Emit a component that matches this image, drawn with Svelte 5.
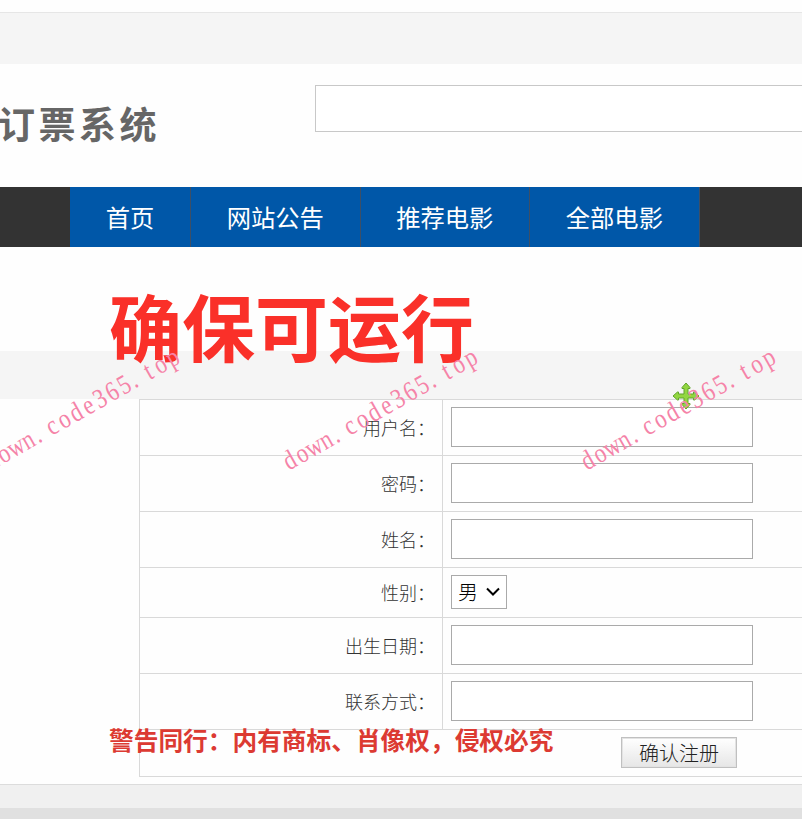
<script lang="ts">
	type Field = { label: string; name: string; kind: 'text' | 'password' | 'select' };

	const navItems = ['首页', '网站公告', '推荐电影', '全部电影'];

	const fields: Field[] = [
		{ label: '用户名', name: 'username', kind: 'text' },
		{ label: '密码', name: 'password', kind: 'password' },
		{ label: '姓名', name: 'realname', kind: 'text' },
		{ label: '性别', name: 'gender', kind: 'select' },
		{ label: '出生日期', name: 'birthday', kind: 'text' },
		{ label: '联系方式', name: 'contact', kind: 'text' }
	];

	let values = $state<Record<string, string>>({ gender: '男' });

	const mark = 'down.code365.top';
	// every character sits in its own cell; dots hang to the left of theirs
	const markX = [...mark].map((c, i) => i * 16.9 - (c === '.' ? 4 : 0)).join(' ');
	const markStarts = [-8, 290, 588];
</script>

<div class="page">
	<div class="topbar"></div>

	<header class="header">
		<h1 class="logo">订票系统</h1>
		<input class="search" type="text" aria-label="搜索" />
	</header>

	<nav class="nav">
		{#each navItems as item}
			<a href="#top">{item}</a>
		{/each}
	</nav>

	<div class="band"></div>

	<form class="form" onsubmit={(e) => e.preventDefault()}>
		{#each fields as field}
			<div class="row">
				<label class="label" for={field.name}>{field.label}<span>：</span></label>
				<div class="cell">
					{#if field.kind === 'select'}
						<div class="select-wrap">
							<select id={field.name} bind:value={values[field.name]}>
								<option>男</option>
								<option>女</option>
							</select>
							<svg class="chevron" viewBox="0 0 16 10" aria-hidden="true">
								<path d="M2 1.5 L8 7.5 L14 1.5" />
							</svg>
						</div>
					{:else}
						<input id={field.name} type={field.kind} bind:value={values[field.name]} />
					{/if}
				</div>
			</div>
		{/each}
		<div class="row actions">
			<button type="submit">确认注册</button>
		</div>
	</form>

	<footer class="footer">
		<div class="footer-bar"></div>
	</footer>

	<!-- Overlays -->
	<p class="notice big">确保可运行</p>
	<p class="notice small">警告同行：内有商标、肖像权，侵权必究</p>

	<svg class="move" viewBox="0 0 28 28" aria-hidden="true">
		<path
			d="M14 1 L18 5.5 V6.5 H16 V12 H21.5 V10 H22.5 L27 14 L22.5 18 H21.5 V16 H16 V21.5 H18 V22.5 L14 27 L10 22.5 V21.5 H12 V16 H6.5 V18 H5.5 L1 14 L5.5 10 H6.5 V12 H12 V6.5 H10 V5.5 Z"
		/>
	</svg>

	<svg class="marks" viewBox="0 0 802 819" aria-hidden="true">
		{#each markStarts as x}
			<text x={markX} y="8" transform="translate({x} 461) rotate(-29.7) scale(0.82 1)">{mark}</text>
		{/each}
	</svg>
</div>

<style>
	:global(body) {
		margin: 0;
		background: #fff;
	}

	.page {
		position: relative;
		width: 802px;
		height: 819px;
		overflow: hidden;
		background: #fefefe;
		font-family: 'Noto Sans CJK SC', 'Noto Sans', sans-serif;
		color: #555;
	}

	.page * {
		box-sizing: border-box;
	}

	.topbar {
		height: 52px;
		margin-top: 12px;
		border-top: 1px solid #e6e6e6;
		background: #f5f5f5;
	}

	/* Header */

	.header {
		display: flex;
		align-items: flex-start;
		height: 123px;
		padding-top: 21px;
	}

	.logo {
		flex: none;
		width: 317px;
		margin: 10px 0 0 -2px;
		font-size: 37px;
		line-height: 56px;
		font-weight: 700;
		letter-spacing: 3.5px;
		color: #666;
	}

	.search {
		flex: none;
		width: 560px;
		height: 47px;
		border: 1px solid #c8c8c8;
		background: #fff;
	}

	/* Navigation */

	.nav {
		display: flex;
		height: 60px;
		padding-left: 70px;
		background: #333;
	}

	.nav a {
		padding: 0 35.7px;
		border-right: 1px solid #3d4f66;
		background: #0057a8;
		color: #fff;
		font-size: 24.3px;
		line-height: 59px;
		text-decoration: none;
	}

	.band {
		height: 48px;
		margin-top: 104px;
		background: #f5f5f5;
	}

	/* Registration form */

	.form {
		width: 1080px;
		margin-left: 139px;
		border: 1px solid #d9d9d9;
		border-top: none;
	}

	.row {
		display: flex;
		border-top: 1px solid #d9d9d9;
	}

	.label {
		display: flex;
		align-items: center;
		justify-content: flex-end;
		width: 303px;
		padding: 0 7px 2px 0;
		border-right: 1px solid #d9d9d9;
		color: #333;
		font-size: 18px;
		font-weight: 300;
	}

	.cell {
		padding: 7px 8px 8px;
	}

	.cell input {
		display: block;
		width: 302px;
		height: 40px;
		border: 1px solid #aaa;
		background: #fff;
	}

	.select-wrap {
		position: relative;
		width: 56px;
		height: 34px;
	}

	select {
		appearance: none;
		width: 100%;
		height: 100%;
		padding: 0 0 2px 6px;
		border: 1px solid #aaa;
		border-radius: 0;
		background: #fff;
		color: #000;
		font-family: inherit;
		font-size: 20px;
		font-weight: 300;
	}

	.chevron {
		position: absolute;
		top: 12px;
		right: 6px;
		width: 16px;
		height: 10px;
		fill: none;
		stroke: #000;
		stroke-width: 2;
		pointer-events: none;
	}

	.actions {
		justify-content: center;
		height: 47px;
		padding-top: 7px;
	}

	.actions button {
		width: 116px;
		height: 31px;
		padding: 1px 0 0;
		border: 1px solid #c0c0c0;
		box-shadow: inset 0 0 0 1px #e3e3e3;
		background: linear-gradient(#fff, #e6e6e6);
		color: #222;
		font-family: inherit;
		font-size: 20px;
		line-height: 26px;
		font-weight: 300;
	}

	.footer {
		height: 35px;
		margin-top: 7px;
		padding-top: 23px;
		border-top: 1px solid #dcdcdc;
		background: #f0f0f0;
	}

	.footer-bar {
		height: 11px;
		background: #e0e0e0;
	}

	/* Overlays */

	.notice {
		position: absolute;
		margin: 0;
		white-space: nowrap;
		font-weight: 700;
	}

	.big {
		top: 271px;
		left: 109px;
		color: #fa3029;
		font-size: 73px;
		line-height: 106px;
	}

	.small {
		top: 721px;
		left: 109px;
		color: #dc3a32;
		font-size: 24.7px;
		line-height: 36px;
	}

	.move {
		position: absolute;
		top: 382px;
		left: 672px;
		width: 28px;
		height: 28px;
		fill: #92d640;
		stroke: #62a52c;
		stroke-width: 1;
	}

	.marks {
		position: absolute;
		inset: 0;
		width: 802px;
		height: 819px;
		pointer-events: none;
	}

	.marks text {
		fill: #f583a8;
		font-family: 'Liberation Serif', serif;
		font-size: 27.5px;
		text-anchor: middle;
	}
</style>
